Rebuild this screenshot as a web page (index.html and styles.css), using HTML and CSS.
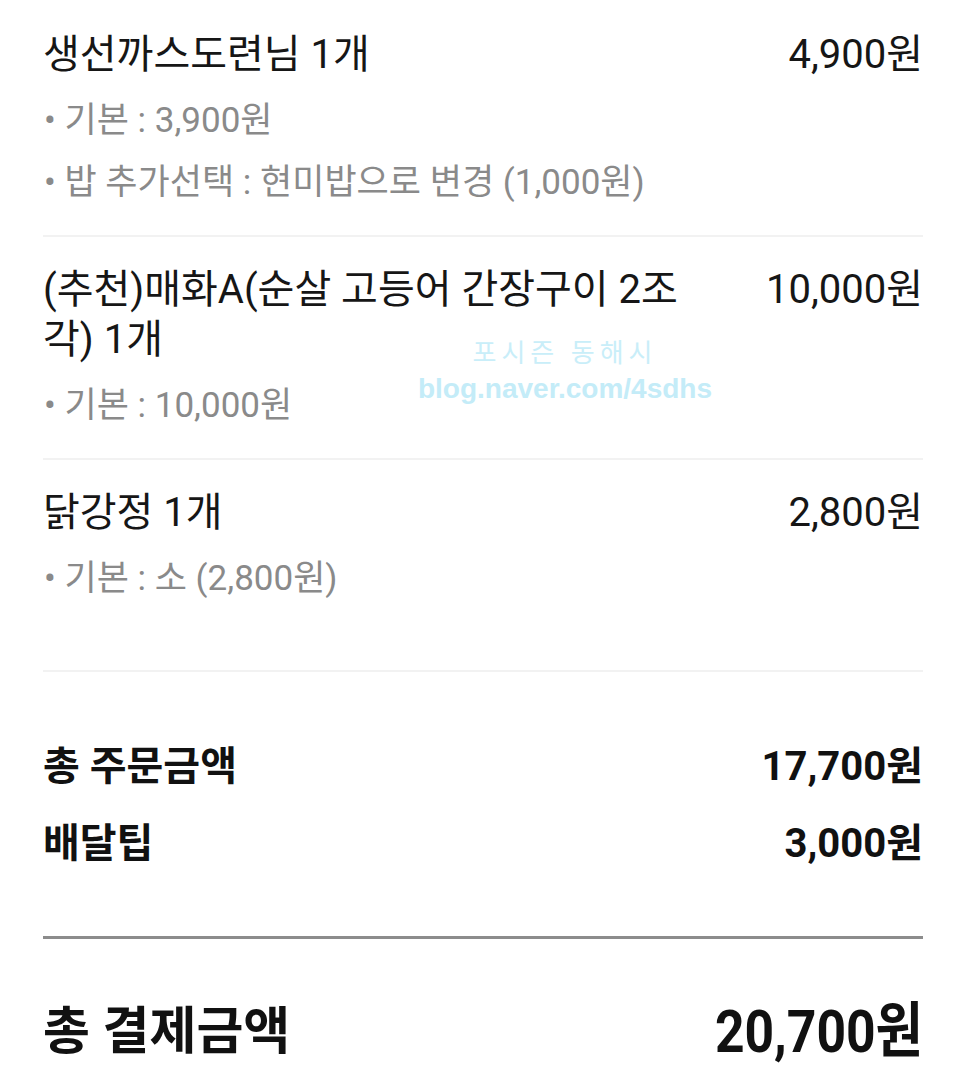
FILE: index.html
```html
<!DOCTYPE html>
<html lang="ko">
<head>
<meta charset="utf-8">
<link rel="stylesheet" href="styles.css">
</head>
<body>
<div class="page">
  <section class="item">
    <div class="item-head">
      <div class="item-title">생선까스도련님 1개</div>
      <div class="item-price">4,900원</div>
    </div>
    <div class="opt">• 기본 : 3,900원</div>
    <div class="opt">• 밥 추가선택 : 현미밥으로 변경 (1,000원)</div>
  </section>
  <section class="item">
    <div class="item-head">
      <div class="item-title narrow">(추천)매화A(순살 고등어 간장구이 2조각) 1개</div>
      <div class="item-price">10,000원</div>
    </div>
    <div class="opt">• 기본 : 10,000원</div>
  </section>
  <section class="item last">
    <div class="item-head">
      <div class="item-title">닭강정 1개</div>
      <div class="item-price">2,800원</div>
    </div>
    <div class="opt">• 기본 : 소 (2,800원)</div>
  </section>

  <section class="sums">
    <div class="sum-row"><span>총 주문금액</span><span class="num">17,700원</span></div>
    <div class="sum-row"><span>배달팁</span><span class="num">3,000원</span></div>
  </section>
  <section class="grand">
    <span>총 결제금액</span><span class="num big">20,700원</span>
  </section>

  <div class="watermark">
    <div class="wm1">포시즌 동해시</div>
    <div class="wm2">blog.naver.com/4sdhs</div>
  </div>
</div>
</body>
</html>
```
FILE: styles.css
```css
html, body {
  margin: 0;
  padding: 0;
  background: #ffffff;
}
.page {
  position: relative;
  padding: 2px 43px 0 43px;
  font-family: Roboto, "Noto Sans CJK KR", sans-serif;
  color: #161616;
}
.item {
  padding: 28px 0 21px;
  border-bottom: 2px solid #f2f2f2;
}
.item.last {
  padding-bottom: 60px;
}
.item-head {
  display: flex;
  justify-content: space-between;
  align-items: flex-start;
  font-size: 40px;
  line-height: 50px;
  margin-bottom: 10px;
}
.item-title.narrow {
  max-width: 660px;
}
.item-price {
  white-space: nowrap;
}
.opt {
  font-size: 35px;
  line-height: 62px;
  color: #8a8a8a;
  padding-left: 1px;
}
.sums {
  padding: 56px 0 54px;
  border-bottom: 3px solid #8c8c8c;
}
.sum-row {
  display: flex;
  justify-content: space-between;
  font-size: 40px;
  line-height: 77px;
  font-weight: 700;
  color: #111;
}
.grand {
  display: flex;
  justify-content: space-between;
  align-items: center;
  padding-top: 53px;
  font-size: 51px;
  line-height: 80px;
  font-weight: 700;
  color: #111;
}
.num.big {
  font-size: 60px;
  display: inline-block;
  transform: scaleX(0.86);
  transform-origin: right center;
}
.watermark {
  position: absolute;
  left: 414px;
  top: 335px;
  width: 302px;
  text-align: center;
  color: #c9eef9;
  pointer-events: none;
}
.wm1 {
  font-size: 26px;
  line-height: 36px;
  letter-spacing: 5px;
}
.wm2 {
  font-family: "Liberation Sans", Arial, sans-serif;
  font-weight: 700;
  font-size: 28px;
  line-height: 36px;
  color: #c4ecf8;
}
```
